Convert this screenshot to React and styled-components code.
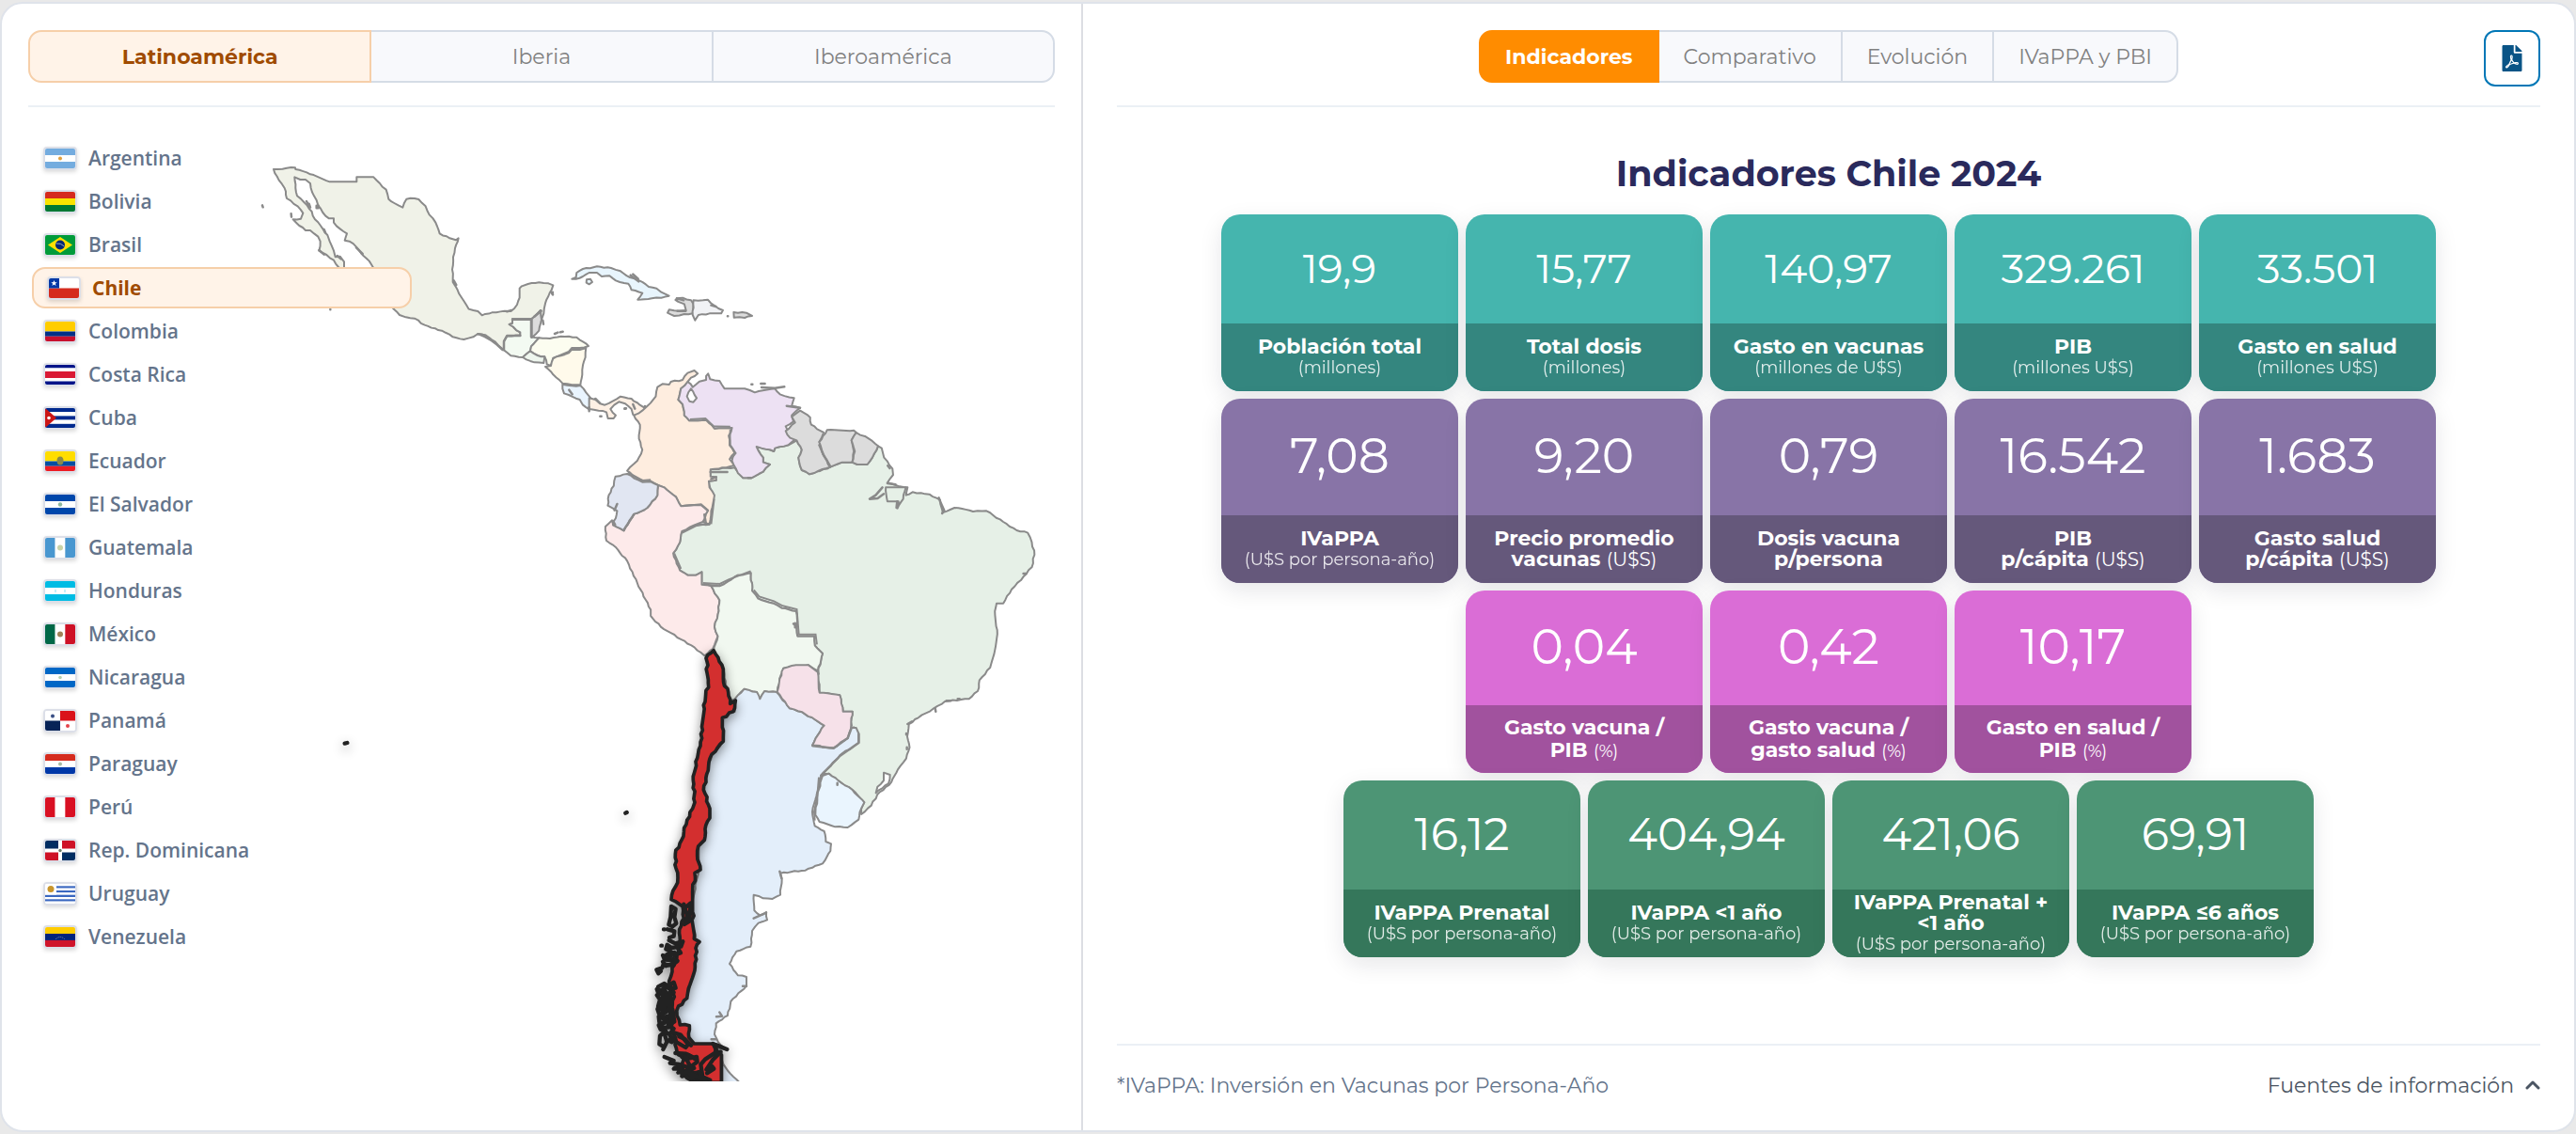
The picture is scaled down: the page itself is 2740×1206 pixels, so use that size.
import React, { useState } from "react";
import styled, { createGlobalStyle, css } from "styled-components";
import { FaFilePdf } from "react-icons/fa";

const display = `Montserrat, Inter, "Open Sans", sans-serif`;
const text = `"Segoe UI", "Open Sans", "Noto Sans", sans-serif`;

const GlobalStyle = createGlobalStyle`
  *, *::before, *::after { box-sizing: border-box; }
  body { margin: 0; background: #e9e9e9; font-family: ${display}; }
  button { font: inherit; cursor: pointer; }
`;

/* ---------- layout ---------- */

const Page = styled.div`
  min-height: 100vh;
  padding: 2px 0;
  display: flex;
`;

const Shell = styled.main`
  flex: 1;
  display: grid;
  grid-template-columns: minmax(0, 575fr) minmax(0, 793fr);
  background: #fff;
  border: 2px solid #dfe3ea;
  border-radius: 24px;
  overflow: hidden;
`;

const MapPanel = styled.section`
  padding: 28px 28px 52px;
  border-right: 2px solid #dcdee3;
`;

const DataPanel = styled.section`
  padding: 28px 36px 0;
  display: flex;
  flex-direction: column;
`;

const PanelHeader = styled.header`
  display: flex;
  align-items: flex-start;
  height: 82px;
  border-bottom: 2px solid #ebf0f5;
`;

const HeaderSide = styled.div`
  flex: 1;
  display: flex;
  justify-content: flex-end;
`;

/* ---------- tabs ---------- */

const Tabs = styled.div`
  display: flex;
  flex: ${(p) => (p.$fill ? 1 : "none")};
`;

const activeTab = {
  soft: css`
    background: #fff3e8;
    border-color: #f6cfa9;
    color: #a04b00;
  `,
  solid: css`
    background: #ff8c00;
    border-color: #ff8c00;
    color: #fff;
  `,
};

const Tab = styled.button`
  flex: ${(p) => (p.$fill ? "1 1 0" : "none")};
  height: 56px;
  padding: 0 26px;
  border: 2px solid #d5dce6;
  background: #f8f9fc;
  color: #808080;
  font-size: 22px;
  font-weight: 400;
  & + & { margin-left: -2px; }
  &:first-child { border-radius: 14px 0 0 14px; }
  &:last-child { border-radius: 0 14px 14px 0; }
  ${(p) =>
    p.$active &&
    css`
      position: relative;
      font-weight: 700;
      ${activeTab[p.$tone]}
    `}
`;

const PdfButton = styled.button`
  width: 60px;
  height: 60px;
  display: grid;
  place-items: center;
  padding: 0;
  border: 2px solid #0077b6;
  border-radius: 12px;
  background: #fff;
  color: #0a5486;
  font-size: 28px;
`;

/* ---------- countries and map ---------- */

const MapArea = styled.div`
  display: grid;
  padding-top: 24px;
`;

const CountryList = styled.ul`
  grid-area: 1 / 1;
  z-index: 1;
  justify-self: start;
  width: 408px;
  margin: 0;
  padding: 8px 0 0 4px;
  list-style: none;
  display: flex;
  flex-direction: column;
  gap: 2px;
`;

const CountryButton = styled.button`
  width: 100%;
  height: 44px;
  display: flex;
  align-items: center;
  gap: 12px;
  padding: 0 12px;
  border: 0;
  background: none;
  color: #64748b;
  font-family: ${text};
  font-size: 21px;
  font-weight: 600;
  text-align: left;
  ${(p) =>
    p.$active &&
    css`
      padding: 0 14px;
      background: #fff3e8;
      border: 2px solid #f6cfa9;
      border-radius: 14px;
      color: #a04b00;
      font-weight: 700;
    `}
`;

const FlagFrame = styled.svg`
  flex: none;
  width: 36px;
  height: 25px;
  border: 2px solid #dcdfe8;
  border-radius: 4px;
  box-shadow: 0 2px 4px rgba(0, 0, 0, 0.14);
`;

const MapSvg = styled.svg`
  grid-area: 1 / 1;
  width: 100%;
  display: block;
`;

/* ---------- indicators ---------- */

const Board = styled.div`
  flex: 1;
  padding-top: 44px;
  display: flex;
  flex-direction: column;
  align-items: center;
  gap: 8px;
`;

const Title = styled.h1`
  margin: 0;
  padding-bottom: 8px;
  line-height: 54px;
  font-size: 38px;
  font-weight: 700;
  color: #2a2a5c;
`;

const Row = styled.div`
  display: flex;
  justify-content: center;
  gap: 8px;
`;

const Card = styled.article`
  width: 252px;
  border-radius: 20px;
  overflow: hidden;
  background: ${(p) => p.$tone.top};
  color: #fff;
  text-align: center;
  box-shadow: 0 8px 24px rgba(15, 23, 42, 0.1);
`;

const Value = styled.div`
  height: ${(p) => p.$tone.height}px;
  padding-bottom: 3px;
  display: grid;
  place-items: center;
  font-size: ${(p) => p.$tone.size}px;
  font-weight: 400;
`;

const Label = styled.div`
  height: 72px;
  display: flex;
  flex-direction: column;
  justify-content: center;
  background: ${(p) => p.$tone.bottom};
  font-size: 22px;
  line-height: ${(p) => p.$tone.line}px;
  font-weight: 700;
  white-space: nowrap;
`;

const Unit = styled.span`
  font-size: ${(p) => p.$size || 18}px;
  font-weight: 400;
  opacity: ${(p) => (p.$inline ? 1 : 0.85)};
`;

const Footer = styled.footer`
  height: 92px;
  padding-bottom: 6px;
  display: flex;
  align-items: center;
  justify-content: space-between;
  border-top: 2px solid #ebf0f5;
  font-size: 22px;
  color: #64748b;
`;

const SourcesButton = styled.button`
  display: flex;
  align-items: center;
  gap: 12px;
  padding: 0;
  border: 0;
  background: none;
  color: #4b5563;
`;

/* ---------- flags ---------- */

const bands = (colors, vertical, weights = colors.map(() => 1)) => {
  const total = weights.reduce((a, b) => a + b, 0);
  const full = vertical ? 32 : 21;
  let at = 0;
  return colors.map((fill, i) => {
    const size = (weights[i] / total) * full;
    const from = at;
    at += size;
    return vertical ? (
      <rect key={i} x={from} y="0" width={size} height="21" fill={fill} />
    ) : (
      <rect key={i} x="0" y={from} width="32" height={size} fill={fill} />
    );
  });
};

const flags = {
  Argentina: <>{bands(["#74acdf", "#fff", "#74acdf"])}<circle cx="16" cy="10.5" r="2" fill="#e0a040" /></>,
  Bolivia: bands(["#d52b1e", "#f9e300", "#007934"]),
  Brasil: (
    <>
      {bands(["#009b3a"])}
      <path d="M16 2 29 10.5 16 19 3 10.5Z" fill="#fedf00" />
      <circle cx="16" cy="10.5" r="5" fill="#002776" />
      <path d="M11.5 9q5-1 9 3" stroke="#9ab" fill="none" />
    </>
  ),
  Chile: (
    <>
      {bands(["#fff", "#d52b1e"])}
      <rect width="11" height="10.5" fill="#0039a6" />
      <path d="m5.500 2 .9 2.200h2.300l-1.900 1.500.8 2.300-2.100-1.400-2.100 1.400.8-2.300-1.900-1.500h2.300z" fill="#fff" />
    </>
  ),
  Colombia: bands(["#ffcd00", "#003087", "#c8102e"], false, [2, 1, 1]),
  "Costa Rica": bands(["#001489", "#fff", "#da1a35", "#fff", "#001489"], false, [1, 1, 2, 1, 1]),
  Cuba: (
    <>
      {bands(["#002a8f", "#fff", "#002a8f", "#fff", "#002a8f"])}
      <path d="M0 0 12 10.500 0 21z" fill="#cb1515" />
      <circle cx="4" cy="10.500" r="1.800" fill="#fff" />
    </>
  ),
  Ecuador: <>{bands(["#ffdd00", "#034ea2", "#ed1c24"], false, [2, 1, 1])}<ellipse cx="16" cy="10" rx="3.500" ry="4.500" fill="#8a8a4a" /></>,
  "El Salvador": <>{bands(["#0047ab", "#fff", "#0047ab"])}<circle cx="16" cy="10.500" r="2.200" fill="#8fb8a0" /></>,
  Guatemala: <>{bands(["#4997d0", "#fff", "#4997d0"], true)}<circle cx="16" cy="10.500" r="3" fill="#c9d3a8" /></>,
  Honduras: <>{bands(["#00bce4", "#fff", "#00bce4"])}<path d="M10 9h2v3h-2zM20 9h2v3h-2z" fill="#c4eff9" /></>,
  México: <>{bands(["#006847", "#fff", "#ce1126"], true)}<circle cx="16" cy="10.500" r="3" fill="#a08458" /></>,
  Nicaragua: <>{bands(["#0067c6", "#fff", "#0067c6"])}<circle cx="16" cy="10.500" r="1.800" fill="#b7d2b0" /></>,
  Panamá: (
    <>
      {bands(["#fff"])}
      <path d="M16 0h16v10.500H16z" fill="#da121a" />
      <path d="M0 10.500h16V21H0z" fill="#072357" />
      <circle cx="8" cy="5.500" r="2" fill="#3a4f85" />
      <circle cx="24" cy="16" r="2" fill="#e3444b" />
    </>
  ),
  Paraguay: <>{bands(["#d52b1e", "#fff", "#0038a8"])}<circle cx="16" cy="10.500" r="2" fill="#a9bba5" /></>,
  Perú: bands(["#d91023", "#fff", "#d91023"], true),
  "Rep. Dominicana": (
    <>
      {bands(["#fff"])}
      <path d="M0 0h14v8.500H0zM18 12.500h14V21H18z" fill="#002d62" />
      <path d="M18 0h14v8.500H18zM0 12.500h14V21H0z" fill="#ce1126" />
      <circle cx="16" cy="10.500" r="1.700" fill="#6b7d6b" />
    </>
  ),
  Uruguay: (
    <>
      {bands(["#fff", "#3a67c0", "#fff", "#3a67c0", "#fff", "#3a67c0", "#fff", "#3a67c0", "#fff"])}
      <rect width="12" height="11.500" fill="#fff" />
      <circle cx="6" cy="5.500" r="3.500" fill="#c9962c" />
    </>
  ),
  Venezuela: <>{bands(["#ffcc00", "#00247d", "#cf142b"])}<path d="M11 13q5-5 10 0" stroke="#8190bd" strokeDasharray="1 1" fill="none" /></>,
};

/* ---------- map ---------- */

// Breaks long edges into small irregular steps. The offset depends only on the
// edge's end points, so neighbouring countries keep the same border.
const coast = (pts, amp = 2) => {
  const p = pts.trim().split(/\s+/).map((s) => s.split(",").map(Number));
  const out = [];
  p.forEach((a, i) => {
    const b = p[(i + 1) % p.length];
    out.push(a.join(","));
    const flip = a[0] > b[0] || (a[0] === b[0] && a[1] > b[1]);
    const [s, e] = flip ? [b, a] : [a, b];
    const dx = e[0] - s[0];
    const dy = e[1] - s[1];
    const len = Math.hypot(dx, dy);
    const n = Math.floor(len / 11);
    if (n < 2 || dx === 0 || dy === 0) return;
    const mid = [];
    for (let k = 1; k < n; k++) {
      const h = Math.sin(s[0] * 12.9 + e[1] * 78.2 + k * 37.7) * 43758.5;
      const j = (h - Math.floor(h) - 0.5) * 2 * amp;
      mid.push(
        `${(s[0] + (dx * k) / n - (dy / len) * j).toFixed(1)},${(s[1] + (dy * k) / n + (dx / len) * j).toFixed(1)}`
      );
    }
    if (flip) mid.reverse();
    out.push(...mid);
  });
  return `M${out.join("L")}Z`;
};

const north = [
  ["#f0f2e8", "93,120 135,116 162,115 163,120 210,136 272,160 358,160 358,145 412,145 432,165 452,185 460,215 478,228 505,242 517,215 530,212 556,216 578,238 590,265 610,290 623,325 655,340 675,346 683,340 672,372 666,400 663,440 665,480 680,505 700,540 716,566 745,573 758,586 790,577 830,572 850,573 870,552 878,530 878,500 885,493 905,486 940,481 970,484 985,490 980,505 970,525 960,548 955,580 948,600 945,570 925,590 915,598 855,598 855,612 845,615 880,640 880,650 838,652 828,670 828,697 800,670 770,650 745,645 730,655 700,663 665,655 630,635 575,617 543,596 515,592 495,585 475,565 440,500 410,432 390,405 372,388 357,368 335,350 320,347 327,325 305,310 285,290 285,277 270,277 250,258 235,235 222,205 212,180 210,165 195,153 178,153 160,145 163,180 168,205 190,225 215,255 225,280 250,310 265,330 272,350 285,380 290,400 305,398 318,415 318,432 322,445 300,432 285,410 262,393 238,380 242,350 235,335 210,315 195,315 175,300 155,280 180,278 187,260 170,238 135,213 128,180 110,155"],
  ["#f3faf2", "855,598 915,598 915,655 940,658 915,685 912,700 888,720 850,715 828,697 828,670 838,652 880,650 880,640 845,615 855,612"],
  ["#dcdcdc", "917,598 930,585 945,570 948,600 940,635 917,657"],
  ["#fcfdf0", "940,658 975,660 1010,653 1060,656 1080,670 1098,684 1070,690 1045,690 1035,702 1010,712 985,722 978,747 965,742 958,718 935,714 912,700 915,685"],
  ["#eef6ee", "912,700 935,714 958,718 955,738 925,736 888,720"],
  ["#fffaeb", "1090,690 1088,720 1080,745 1078,775 1072,808 1045,808 1015,803 985,775 960,750 978,747 985,724 1010,715 1035,706 1045,695 1070,696"],
  ["#e9f4fe", "1015,806 1045,811 1072,810 1090,832 1105,850 1098,885 1080,872 1070,855 1035,840 1020,835 1015,820"],
  ["#fef0e4", "1100,850 1120,855 1135,868 1150,872 1175,860 1200,845 1235,852 1262,872 1280,885 1270,905 1255,912 1240,903 1235,885 1215,868 1195,862 1180,872 1168,885 1185,905 1178,915 1160,915 1155,895 1130,890 1100,885"],
  ["#e8f5fd", "1045,470 1058,465 1060,450 1080,438 1125,430 1170,435 1200,445 1230,465 1260,475 1290,495 1315,500 1330,512 1355,524 1330,530 1300,532 1255,536 1270,515 1235,505 1225,485 1185,475 1165,460 1140,462 1125,450 1100,450 1080,462 1058,470"],
  ["#e8f5fd", "1092,472 1104,470 1110,480 1100,487 1091,482"],
];

const middle = [
  ["#dcdcdc", "447,172 465,170 490,178 497,190 495,220 470,222 440,228 420,218 425,208 455,212 475,210 470,190 450,182"],
  ["#f1f2f5", "497,178 540,176 560,195 585,210 580,220 545,220 512,225 502,242 495,225"],
  ["#dcdcdc", "617,216 655,218 672,228 650,234 618,233"],
  ["#e6f0e7", "1047,643 1058,650 1065,680 1090,715 1092,735 1075,760 1100,768 1135,775 1130,800 1150,790 1200,797 1232,815 1240,855 1275,840 1330,852 1370,850 1420,885 1460,912 1493,920 1505,950 1513,990 1505,1030 1480,1060 1445,1100 1420,1145 1400,1145 1395,1170 1402,1230 1395,1295 1381,1350 1349,1390 1344,1425 1318,1450 1246,1458 1213,1480 1167,1510 1139,1530 1134,1570 1141,1605 1131,1640 1106,1675 1087,1715 1045,1755 1027,1790 997,1818 997,1800 1006,1780 971,1740 938,1718 901,1688 882,1690 924,1630 989,1590 989,1560 975,1540 966,1545 971,1490 943,1490 933,1438 873,1430 868,1365 882,1305 859,1280 857,1250 807,1250 803,1170 760,1160 735,1145 690,1130 672,1105 668,1048 630,1055 600,1075 575,1090 522,1085 522,1045 505,1055 480,1055 457,1040 437,985 457,950 463,915 500,895 545,893 555,805 543,755 565,752 548,740 548,718 620,712 645,745 670,745 705,725 725,702 705,695 705,680 685,645 737,660 740,650 780,640 805,625 820,655 810,680 820,720 843,733 905,710 940,695 970,695 985,702 1015,702 1030,680"],
  ["#feeddf", "300,722 320,700 330,690 345,655 335,620 338,575 320,545 345,530 360,515 385,485 390,455 405,445 425,447 430,438 465,432 480,410 500,402 510,412 490,425 480,438 460,460 452,495 465,510 470,545 485,562 535,560 560,587 612,585 603,610 605,640 620,665 605,685 620,705 595,712 548,718 548,740 565,742 565,752 543,755 545,775 560,800 550,850 545,893 525,885 540,850 520,832 460,835 445,805 410,775 392,768 370,755 345,758"],
  ["#ede1f3", "480,438 495,455 515,437 535,432 535,420 541,412 547,430 575,435 590,460 650,460 680,472 740,460 755,478 797,490 790,515 815,522 790,545 795,565 772,580 780,605 800,622 780,640 740,650 737,660 700,650 685,645 705,680 705,695 725,702 705,725 670,745 645,745 630,730 612,690 620,665 605,640 603,610 612,585 560,587 535,560 485,562 470,545 465,510 452,495 460,460"],
  ["#ffffff", "490,460 478,485 485,500 497,503 507,490"],
  ["#dcdcdc", "815,530 845,552 848,575 885,600 872,630 880,660 905,710 870,722 843,733 820,720 810,680 820,655 805,625 785,617 772,595 800,568 790,550"],
  ["#dcdcdc", "895,592 975,593 982,600 968,625 975,660 970,695 940,695 905,710 880,660 872,630"],
  ["#dcdcdc", "982,600 1020,620 1047,643 1030,680 1015,702 985,702 970,695 978,660 968,625"],
  ["#e6f0e7", "1070,775 1130,775 1122,812 1105,842 1108,820 1075,820"],
  ["#fdeaea", "258,895 290,913 320,860 360,840 390,800 392,768 410,775 445,805 460,835 520,832 540,850 525,885 500,895 463,915 457,950 437,985 457,1040 480,1055 505,1055 522,1045 522,1085 550,1090 575,1135 570,1180 560,1220 570,1250 555,1290 530,1312 500,1285 400,1220 370,1185 370,1165 330,1080 300,1010 265,965 238,945 235,900 255,880"],
  ["#e1e6f2", "300,732 345,758 370,757 392,768 390,800 360,840 320,860 290,913 258,895 270,850 242,833 245,800 260,770 265,740"],
  ["#f1f8f0", "550,1090 575,1090 600,1075 630,1055 668,1048 672,1105 690,1130 735,1145 760,1160 803,1170 807,1250 857,1250 859,1280 882,1305 868,1360 840,1342 765,1352 754,1385 747,1428 709,1425 695,1450 686,1428 649,1418 621,1450 602,1460 588,1360 557,1295 570,1250 560,1220 570,1180 575,1135"],
];

const south = [
  ["#e3eefa", "425,250 455,218 495,228 505,250 520,225 558,228 600,280 640,292 710,335 690,365 672,398 740,406 785,375 795,342 812,342 820,360 820,390 760,430 700,495 685,560 672,610 680,655 710,672 715,705 732,712 730,735 705,775 650,797 570,806 575,825 570,875 545,888 515,886 485,875 487,925 505,940 525,930 528,955 500,965 480,990 475,1040 430,1055 408,1095 435,1132 462,1137 462,1165 412,1215 402,1260 365,1285 360,1320 372,1345 400,1370 285,1350 275,1290 245,1285 240,1230 275,1190 298,1100 300,1030 285,910 310,800 310,720 345,600 325,540 350,430 385,390 385,300 425,290"],
  ["#e3eefa", "385,1385 388,1415 410,1445 440,1474 385,1474"],
  ["#f6e1e9", "690,165 660,142 620,142 580,152 568,185 560,228 600,280 640,292 710,335 690,365 672,398 740,406 785,375 795,345 800,290 770,290 760,238 695,230"],
  ["#eaf5fe", "705,495 725,488 765,518 800,540 838,580 828,600 820,635 785,660 745,658 695,642 682,620 688,560"],
  ["#ffffff", "900,485 920,492 915,520 875,550 880,530 900,510"],
];

const chile =
  "357,95 375,130 388,155 388,185 405,240 410,265 427,255 420,290 385,310 385,340 388,385 370,405 345,440 335,490 325,540 345,600 345,630 330,665 328,700 308,720 305,750 315,795 297,805 290,880 290,930 295,1015 312,1025 300,1045 298,1105 275,1185 272,1205 245,1230 240,1260 250,1290 280,1292 278,1330 295,1350 355,1350 370,1375 382,1385 382,1474 290,1474 265,1452 245,1430 262,1400 240,1375 235,1330 215,1290 222,1240 232,1200 215,1150 225,1120 240,1065 250,1020 248,985 262,950 258,912 222,890 235,850 243,820 237,790 235,745 255,700 270,650 290,600 297,580 292,510 300,450 315,400 322,350 325,270 340,200 333,120";

const chileIslands = [
  "M222 912l14 8-4 26 6 20-12 10-12-6 6-24zM198 985h3M190 1037h2M210 985l22 6-2 16-14 4",
  "M215 1020l20 10 24-6-6 16-30 4-14-10-4 14 22 12-10 14-22-6 6 14 30 2-8 16-26-4-4 12-18 6 6 12 8-8",
  "M208 1065l24-6M195 1088l10 14 22-8M240 1040l12 20-20 8M228 1078l14 8-18 14",
  "M180 1168l20-10 12 8 18-12 6 18-18 4-10-8-20 12-12-4 6 16 24-6 8 10 16-10",
  "M176 1195l10 14-6 22 10 6 14-18-4-18 18 8-4 20-16 8-20 2 6 18 22-8 10-16 10 14-10 14-24 6-10-4 2 18 14 4 18-14 10 8-8 18-20 2-16-8 6 14 16 4",
  "M200 1165l8 60 10-40 6 52-20-30-10 50 24-22 6 52-28-16-6-50zM226 1240l6 40-20 10 18 12",
  "M186 1325l16-14 16 10 6 24-14-6-10 22-16-10zM196 1368l12-24-6-20M222 1312l30 10 24 30-8 10-34-20-16-18",
  "M200 1392l30 12-12 8 30 4-18 14 28-2-14 14 34-8-22 20 30-12-12 16 36-4-20 14 40-2",
  "M235 1380l34 2 20 10-26 8 40-8 2 16-30 22 20-2-34 20 44-6-6 16 30 2M285 1355l-20-20-18-8",
  "M300 1400l-24-14-20 6M330 1400l-14 16 6 40 24 10M330 1400l30-20 20-4-26 26-20 30 18-10 6 8-22 14M355 1350l45 18-34-14-4 30",
  "M246 1420l12 30 20-20 10 30M266 1390l20 40-26-10M270 1440l60 26M310 1440l24 30",
  "M262 905l12 40-10 24 16-10 4-58-14 12",
];

const Region = ({ fill, points }) => (
  <path d={coast(points)} fill={fill} stroke="#8a8a8a" strokeWidth="2" strokeLinejoin="round" vectorEffect="non-scaling-stroke" />
);

const Specks = ({ d }) => (
  <path d={d} fill="none" stroke="#8a8a8a" strokeWidth="2.500" strokeLinecap="round" strokeLinejoin="round" vectorEffect="non-scaling-stroke" />
);

const LatinAmericaMap = () => (
  <MapSvg viewBox="30 138 1092 1012" role="img" aria-label="Mapa de Latinoamérica">
    <g transform="translate(260 140) scale(.33333)">
      {north.map(([fill, pts]) => <Region key={pts} fill={fill} points={pts} />)}
      <Specks d="M57 235l2 6M149 262l1 10M274 567v1M198 222l10 18M206 230l4 12M230 236l6 0 0 8-6 0zM238 378l16 14M254 312l4 10M296 396l12 10M668 475l8 14M838 574l14-4M979 512l5 8M952 602l2 12M990 645l10-4M1008 640l8-2M1135 908h4M1214 883h4M1036 824l10 14M1240 455l16 14M925 590l22-18M1120 852l14 14M1278 876l4 16M745 646l24 4M1100 880v12M1240 870l6 14M1376 537l4 2M357 370l20 20M855 599h60v56M880 651h-42l-10 18v26M748 646q40 14 76 50" />
    </g>
    <g transform="translate(560 260) scale(.35714 .33333)">
      {middle.map(([fill, pts]) => <Region key={pts} fill={fill} points={pts} />)}
      <Specks d="M599 229h1M670 446h3M698 444h12M700 456l40 2 28-4M292 524h3M78 152v6M448 172l20 6M450 212l24 0M550 194l14 4M258 882l6 12M262 848l8-20M1060 775l-20 25-18 12 24-2 18-14M1075 762l24 4M1228 808l4 12 12 28-6 10M1076 706l6 8M660 745h8M548 726h50M550 748l15-6M530 862l4 26M775 515l40 6M1480 1050h8M1104 820l-2 20M800 1208v14M310 98l24 20M872 640l14 34 18 32M290 911l30-50" />
      <path d="M607 590l-1 22 1 28 16 26-14 18M487 558l46-3 24 25 50 1M440 985l20 50M302 727l44 26 24-2M526 1080l50 3 26-14 66-27M677 1102l16 21 44 15 26 15 42 11 6 80h50l4 32M464 920l40-22 40-8M550 892l9-80M464 835l56-6 22 20" fill="none" stroke="#8a8a8a" strokeWidth="2" vectorEffect="non-scaling-stroke" />
    </g>
    <g transform="translate(640 660) scale(.33333)">
      {south.map(([fill, pts]) => <Region key={pts} fill={fill} points={pts} />)}
      <Specks d="M568 800l6 22M366 1264l18-2-8-12M350 1336h16M450 1166h12M485 950l40-18M976 330l14-8M972 360v4M974 404v6M1064 280l2 10M1100 256h14M1136 250h6M752 518v6M690 158l2 12M612 10l10 6M674 400l66 7 45-32 12-32M820 362v28l-60 42-60 62" />
      <path d="M693 500l-5 60-10 50 2 28" fill="none" stroke="#8a8a8a" strokeWidth="2" vectorEffect="non-scaling-stroke" />
      <g style={{ filter: "drop-shadow(0 12px 18px rgba(0,0,0,.45))" }} stroke="#222" strokeWidth="11" strokeLinejoin="round" strokeLinecap="round">
        <path d={coast(chile, 4)} fill="#d32f2f" />
        {chileIslands.map((d) => <path key={d} d={d} fill="none" strokeWidth="13" />)}
        <path d="M76 614l4-2M-820 392l8-2" strokeWidth="13" />
      </g>
    </g>
  </MapSvg>
);

/* ---------- data ---------- */

const teal = { top: "#45b5ae", bottom: "#34867f", height: 116, size: 44, line: 22 };
const violet = { top: "#8874a7", bottom: "#65587b", height: 124, size: 52, line: 22, unit: 20 };
const pink = { top: "#da6dd6", bottom: "#a1529e", height: 122, size: 52, line: 24, unit: 18 };
const green = { top: "#4d9575", bottom: "#35775b", height: 116, size: 48, line: 22 };

const perYear = "(U$S por persona-año)";

const rows = [
  { tone: teal, cards: [
    { value: "19,9", lines: ["Población total"], below: "(millones)" },
    { value: "15,77", lines: ["Total dosis"], below: "(millones)" },
    { value: "140,97", lines: ["Gasto en vacunas"], below: "(millones de U$S)" },
    { value: "329.261", lines: ["PIB"], below: "(millones U$S)" },
    { value: "33.501", lines: ["Gasto en salud"], below: "(millones U$S)" },
  ] },
  { tone: violet, cards: [
    { value: "7,08", lines: ["IVaPPA"], below: perYear },
    { value: "9,20", lines: ["Precio promedio", "vacunas"], inline: "(U$S)" },
    { value: "0,79", lines: ["Dosis vacuna", "p/persona"] },
    { value: "16.542", lines: ["PIB", "p/cápita"], inline: "(U$S)" },
    { value: "1.683", lines: ["Gasto salud", "p/cápita"], inline: "(U$S)" },
  ] },
  { tone: pink, cards: [
    { value: "0,04", lines: ["Gasto vacuna /", "PIB"], inline: "(%)" },
    { value: "0,42", lines: ["Gasto vacuna /", "gasto salud"], inline: "(%)" },
    { value: "10,17", lines: ["Gasto en salud /", "PIB"], inline: "(%)" },
  ] },
  { tone: green, cards: [
    { value: "16,12", lines: ["IVaPPA Prenatal"], below: perYear },
    { value: "404,94", lines: ["IVaPPA <1 año"], below: perYear },
    { value: "421,06", lines: ["IVaPPA Prenatal +", "<1 año"], below: perYear },
    { value: "69,91", lines: ["IVaPPA ≤6 años"], below: perYear },
  ] },
];

const Indicator = ({ tone, value, lines, inline, below }) => (
  <Card $tone={tone}>
    <Value $tone={tone}>{value}</Value>
    <Label $tone={tone}>
      {lines.map((line, i) => (
        <div key={line}>
          {line}
          {inline && i === lines.length - 1 && <>{" "}<Unit $inline $size={tone.unit}>{inline}</Unit></>}
        </div>
      ))}
      {below && <Unit>{below}</Unit>}
    </Label>
  </Card>
);

const TabGroup = ({ items, value, onChange, tone, fill }) => (
  <Tabs role="tablist" $fill={fill}>
    {items.map((name) => (
      <Tab
        key={name}
        type="button"
        role="tab"
        aria-selected={name === value}
        $active={name === value}
        $tone={tone}
        $fill={fill}
        onClick={() => onChange(name)}
      >
        {name}
      </Tab>
    ))}
  </Tabs>
);

export default function App() {
  const [region, setRegion] = useState("Latinoamérica");
  const [view, setView] = useState("Indicadores");
  const [country, setCountry] = useState("Chile");

  return (
    <Page>
      <GlobalStyle />
      <Shell>
        <MapPanel>
          <PanelHeader>
            <TabGroup items={["Latinoamérica", "Iberia", "Iberoamérica"]} value={region} onChange={setRegion} tone="soft" fill />
          </PanelHeader>
          <MapArea>
            <CountryList>
              {Object.keys(flags).map((name) => (
                <li key={name}>
                  <CountryButton type="button" $active={name === country} onClick={() => setCountry(name)}>
                    <FlagFrame viewBox="0 0 32 21" preserveAspectRatio="none" aria-hidden="true">{flags[name]}</FlagFrame>
                    {name}
                  </CountryButton>
                </li>
              ))}
            </CountryList>
            <LatinAmericaMap />
          </MapArea>
        </MapPanel>
        <DataPanel>
          <PanelHeader>
            <HeaderSide />
            <TabGroup items={["Indicadores", "Comparativo", "Evolución", "IVaPPA y PBI"]} value={view} onChange={setView} tone="solid" />
            <HeaderSide>
              <PdfButton type="button" aria-label="Descargar PDF"><FaFilePdf /></PdfButton>
            </HeaderSide>
          </PanelHeader>
          <Board>
            <Title>Indicadores Chile 2024</Title>
            {rows.map(({ tone, cards }) => (
              <Row key={tone.top}>
                {cards.map((card) => <Indicator key={card.value} tone={tone} {...card} />)}
              </Row>
            ))}
          </Board>
          <Footer>
            <span>*IVaPPA: Inversión en Vacunas por Persona-Año</span>
            <SourcesButton type="button">
              Fuentes de información
              <svg width="16" height="10" viewBox="0 0 16 10" fill="none" stroke="currentColor" strokeWidth="3" strokeLinecap="round" strokeLinejoin="round" aria-hidden="true">
                <path d="M2 8l6-6 6 6" />
              </svg>
            </SourcesButton>
          </Footer>
        </DataPanel>
      </Shell>
    </Page>
  );
}
